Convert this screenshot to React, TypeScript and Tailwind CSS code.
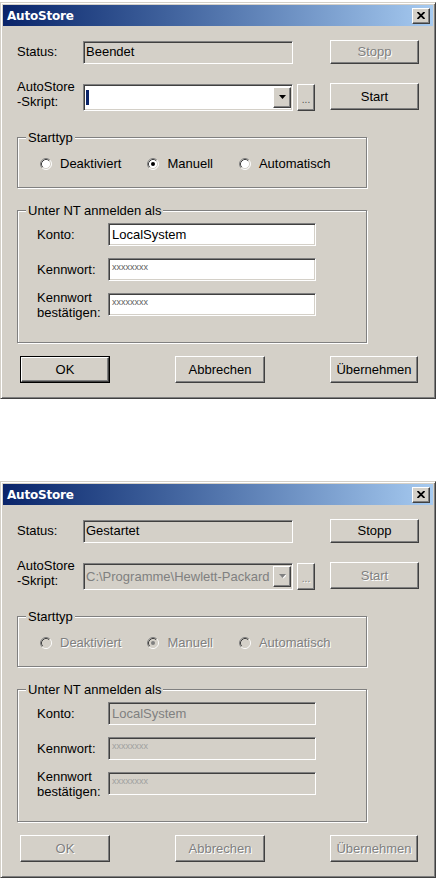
import React from 'react'

const raised =
  'border border-t-white border-l-white border-b-[#404040] border-r-[#404040] shadow-[inset_-1px_-1px_0_#808080,inset_1px_1px_0_#d4d0c8] bg-[#d4d0c8]'
const sunken =
  'border border-t-[#808080] border-l-[#808080] border-b-white border-r-white shadow-[inset_1px_1px_0_#404040,inset_-1px_-1px_0_#d4d0c8]'
const etched = 'border border-[#808080] shadow-[inset_1px_1px_0_#fff,1px_1px_0_#fff]'
const grayed = 'text-[#808080] [text-shadow:1px_1px_0_#fff]'

function Button({
  label,
  size,
  disabled,
  isDefault,
}: {
  label: string
  size: string
  disabled?: boolean
  isDefault?: boolean
}) {
  const inner = (
    <div
      className={`${raised} w-full h-full flex items-center justify-center ${disabled ? grayed : 'text-black'}`}
    >
      {label}
    </div>
  )
  if (isDefault) {
    return <div className={`${size} border border-black`}>{inner}</div>
  }
  return <div className={size}>{inner}</div>
}

function Radio({ label, checked, disabled }: { label: string; checked?: boolean; disabled?: boolean }) {
  return (
    <div className="flex items-center gap-[8px]">
      <svg width="12" height="12" viewBox="0 0 12 12">
        <circle cx="6" cy="6" r="5" fill={disabled ? '#d4d0c8' : '#fff'} />
        <path d="M9.89 2.11 A5.5 5.5 0 0 0 2.11 9.89" stroke="#808080" fill="none" />
        <path d="M2.11 9.89 A5.5 5.5 0 0 0 9.89 2.11" stroke="#fff" fill="none" />
        <path d="M9.18 2.82 A4.5 4.5 0 0 0 2.82 9.18" stroke="#404040" fill="none" />
        <path d="M2.82 9.18 A4.5 4.5 0 0 0 9.18 2.82" stroke="#d4d0c8" fill="none" />
        {checked && <circle cx="6" cy="6" r="2" fill={disabled ? '#808080' : '#000'} />}
      </svg>
      <span className={disabled ? grayed : 'text-black'}>{label}</span>
    </div>
  )
}

function Field({ value, password, disabled }: { value: string; password?: boolean; disabled?: boolean }) {
  return (
    <div
      className={`${sunken} w-[208px] h-[23px] pl-[3px] flex ${password ? 'items-start pt-[4px]' : 'items-center'} ${disabled ? 'bg-[#d4d0c8] text-[#808080]' : 'bg-white text-black'}`}
    >
      {password ? (
        <span className={`text-[9px] leading-[9px] ${disabled ? 'text-[#a0a0a0]' : 'text-[#606060]'}`}>{value}</span>
      ) : (
        value
      )}
    </div>
  )
}

function Dialog({ running }: { running: boolean }) {
  const off = running
  return (
    <div className="w-[436px] h-[397px] bg-[#d4d0c8] border border-t-[#d4d0c8] border-l-[#d4d0c8] border-b-[#404040] border-r-[#404040] shadow-[inset_1px_1px_0_#fff,inset_-1px_-1px_0_#808080] p-[2px] flex flex-col">
      <div className="h-[21px] bg-gradient-to-r from-[#0a246a] to-[#a6caf0] flex items-center justify-between pl-[4px] pr-[3px]">
        <span className="font-['DejaVu_Sans',Verdana,sans-serif] font-bold text-[12px] text-white tracking-[-0.2px]">
          AutoStore
        </span>
        <div className={`${raised} w-[18px] h-[16px] flex items-center justify-center`}>
          <svg width="8" height="7" viewBox="0 0 8 7">
            <path d="M0.5 0 L7.5 7 M7.5 0 L0.5 7" stroke="#000" strokeWidth="1.8" />
          </svg>
        </div>
      </div>

      <div className="flex-1 flex flex-col px-[14px]">
        <div className="mt-[14px] h-[24px] flex items-center">
          <span className="w-[66px]">Status:</span>
          <div className={`${sunken} w-[210px] h-[23px] flex items-center pl-[2px]`}>
            {running ? 'Gestartet' : 'Beendet'}
          </div>
          <div className="ml-auto">
            <Button label="Stopp" size="w-[89px] h-[24px]" disabled={!running} />
          </div>
        </div>

        <div className="mt-[19px] h-[28px] flex items-start">
          <span className="w-[66px] leading-[15px] -mt-[4px]">
            AutoStore
            <br />
            -Skript:
          </span>
          <div
            className={`${sunken} mt-[1px] w-[210px] h-[27px] flex items-center pr-[1px] ${off ? 'bg-[#d4d0c8]' : 'bg-white'}`}
          >
            <div className="flex-1 flex items-center pl-[2px] overflow-hidden whitespace-nowrap">
              {off ? (
                <span className="text-[#808080]">C:\Programme\Hewlett-Packard</span>
              ) : (
                <span className="w-[3px] h-[15px] bg-[#0a246a]" />
              )}
            </div>
            <div className={`${raised} w-[18px] h-[21px] flex items-center justify-center`}>
              <svg width="7" height="5" viewBox="0 0 7 5">
                {off && <path d="M1 1 H8 L4.5 4.5 Z" fill="#fff" />}
                <path d="M0 0 H7 L3.5 4 Z" fill={off ? '#808080' : '#000'} />
              </svg>
            </div>
          </div>
          <div className="ml-[4px] mt-[1px]">
            <div className={`${raised} w-[18px] h-[27px] flex items-end justify-center pb-[5px] text-[10px] leading-[10px] ${off ? grayed : 'text-[#505050]'}`}>
              ...
            </div>
          </div>
          <div className="ml-auto">
            <Button label="Start" size="w-[89px] h-[27px]" disabled={running} />
          </div>
        </div>

        <div className={`${etched} relative mt-[26px] w-[350px] h-[51px] pt-[18px] pl-[22px]`}>
          <span className="absolute left-[8px] -top-[8px] px-[2px] leading-[15px] bg-[#d4d0c8]">Starttyp</span>
          <div className="flex items-center gap-[26px] h-[15px]">
            <Radio label="Deaktiviert" disabled={off} />
            <Radio label="Manuell" checked disabled={off} />
            <Radio label="Automatisch" disabled={off} />
          </div>
        </div>

        <div className={`${etched} relative mt-[22px] w-[350px] h-[133px] pt-[12px] pl-[19px] flex flex-col gap-[12px]`}>
          <span className="absolute left-[8px] -top-[8px] px-[2px] leading-[15px] bg-[#d4d0c8]">
            Unter NT anmelden als
          </span>
          <div className="h-[23px] flex items-center">
            <span className="w-[71px]">Konto:</span>
            <Field value="LocalSystem" disabled={off} />
          </div>
          <div className="h-[23px] flex items-center">
            <span className="w-[71px]">Kennwort:</span>
            <Field value="xxxxxxxx" password disabled={off} />
          </div>
          <div className="h-[23px] flex items-center">
            <span className="w-[71px] leading-[15px] mt-[1px]">
              Kennwort
              <br />
              bestätigen:
            </span>
            <Field value="xxxxxxxx" password disabled={off} />
          </div>
        </div>

        <div className="mt-[13px] flex justify-between pl-[3px] pr-[1px]">
          <Button label="OK" size="w-[90px] h-[27px]" disabled={off} isDefault={!off} />
          <Button label="Abbrechen" size="w-[90px] h-[27px]" disabled={off} />
          <Button label="Übernehmen" size="w-[88px] h-[27px]" disabled={off} />
        </div>
      </div>
    </div>
  )
}

export default function App() {
  return (
    <div className="w-[436px] h-[880px] bg-white pt-[2px] font-['Liberation_Sans',Arial,sans-serif] text-[13px] text-black">
      <Dialog running={false} />
      <div className="mt-[82px]">
        <Dialog running={true} />
      </div>
    </div>
  )
}
